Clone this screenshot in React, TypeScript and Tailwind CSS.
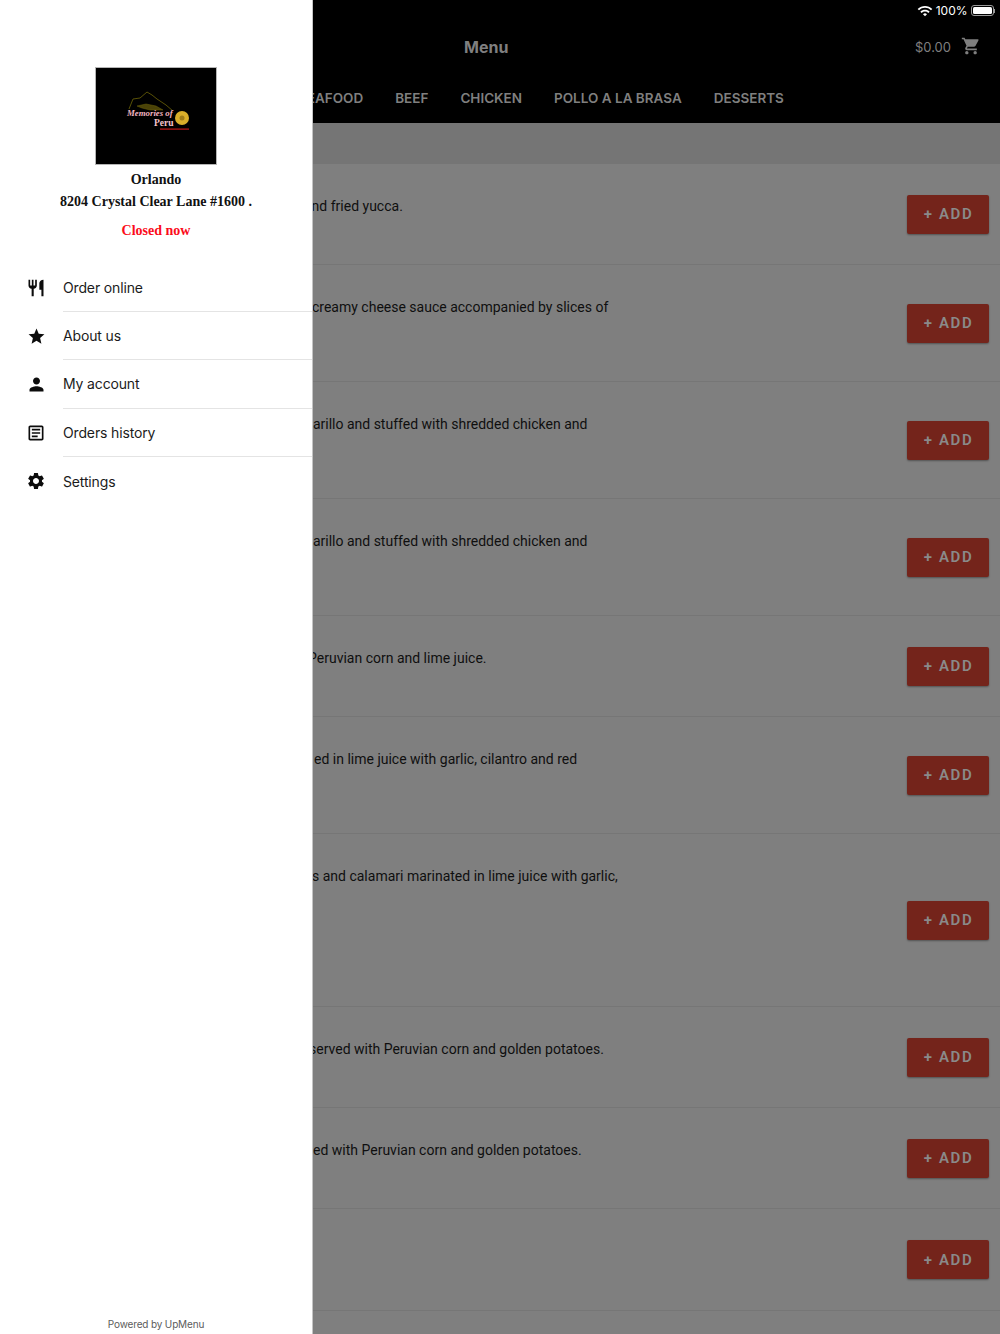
import React from "react";
import { MdRestaurant, MdStar, MdPerson, MdOutlineArticle, MdSettings, MdShoppingCart, MdWifi } from "react-icons/md";

const nav = [
  { label: "Order online", Icon: MdRestaurant, size: "w-[20px] h-[20px]" },
  { label: "About us", Icon: MdStar, size: "w-[19px] h-[19px]" },
  { label: "My account", Icon: MdPerson, size: "w-[21px] h-[21px]" },
  { label: "Orders history", Icon: MdOutlineArticle, size: "w-[20px] h-[20px]" },
  { label: "Settings", Icon: MdSettings, size: "w-[20px] h-[20px]" },
];

const rows = [
  { h: "h-[101px]", text: "and fried yucca.", shift: "ml-[-9px]" },
  { h: "h-[117px]", text: "creamy cheese sauce accompanied by slices of", shift: "ml-[-1px]" },
  { h: "h-[117px]", text: "amarillo and stuffed with shredded chicken and", shift: "ml-[-20px]" },
  { h: "h-[117px]", text: "amarillo and stuffed with shredded chicken and", shift: "ml-[-20px]" },
  { h: "h-[101px]", text: "Peruvian corn and lime juice.", shift: "ml-[-5px]" },
  { h: "h-[117px]", text: "ed in lime juice with garlic, cilantro and red", shift: "ml-[1px]" },
  { h: "h-[173px]", text: "s and calamari marinated in lime juice with garlic,", shift: "ml-[-1px]" },
  { h: "h-[101px]", text: "served with Peruvian corn and golden potatoes.", shift: "ml-[-4px]" },
  { h: "h-[101px]", text: "ed with Peruvian corn and golden potatoes.", shift: "ml-[0px]" },
  { h: "h-[102px]", text: "", shift: "ml-[0px]" },
];

function Logo() {
  return (
    <div className="w-[122px] h-[98px] bg-black border border-[#b5b5b5]">
      <svg width="120" height="96" viewBox="0 0 120 96">
        <path d="M33 41 L37 31 L44 30 L51 24 L56 27 L61 31 L70 37 L77 43" fill="none" stroke="#6e6408" strokeWidth="0.8" />
        <path d="M41 38 L50 36 L60 38 L67 42 L54 42 L46 40 Z" fill="#4a4208" stroke="#6e6408" strokeWidth="0.5" />
        <text x="31" y="48" fontFamily="'Liberation Serif', serif" fontSize="8.8" fontWeight="700" fontStyle="italic" fill="#f4b6c0">Memories of</text>
        <text x="58" y="57.5" fontFamily="'Liberation Serif', serif" fontSize="9.5" fontWeight="700" fill="#f4c4cc">Peru</text>
        <circle cx="86" cy="50" r="7" fill="#d9ae2a" />
        <circle cx="86" cy="50" r="2.5" fill="#a07c18" />
        <rect x="64" y="60.5" width="29" height="1.2" fill="#c01818" />
      </svg>
    </div>
  );
}

function Drawer() {
  return (
    <aside className="w-[313px] shrink-0 h-[1334px] bg-white flex flex-col border-r border-[#c4c4c4] font-['Inter',sans-serif]">
      <div className="flex flex-col items-center pt-[67px] font-['Liberation_Serif',serif] font-bold text-[#111111]">
        <Logo />
        <div className="mt-[5px] text-[14px] leading-[20px]">Orlando</div>
        <div className="mt-[1px] text-[14px] leading-[22px] whitespace-nowrap">8204 Crystal Clear Lane #1600 .</div>
        <div className="mt-[8px] text-[14px] leading-[20px] text-[#fb0d1b]">Closed now</div>
      </div>
      <nav className="mt-[22.7px] flex flex-col">
        {nav.map(({ label, Icon, size }, i) => (
          <div key={label} className="flex h-[48.3px] items-center">
            <div className="w-[63px] pl-[9px] shrink-0 flex justify-center">
              <Icon className={`${size} text-[#0c0c0c]`} />
            </div>
            <div className={`flex-1 h-full flex items-center text-[14px] tracking-[-0.15px] text-[#1b1b1b] ${i < nav.length - 1 ? "border-b border-[#e4e4e4]" : ""}`}>
              {label}
            </div>
          </div>
        ))}
      </nav>
      <div className="mt-auto pb-[3px] text-center text-[10px] tracking-[-0.15px] leading-[14px] text-[#5c5c5c]">Powered by UpMenu</div>
    </aside>
  );
}

function Main() {
  return (
    <main className="flex-1 min-w-0 h-[1334px] overflow-hidden bg-[#7f7f7f] font-['Inter',sans-serif]">
      <header className="bg-black h-[123px] flex flex-col">
        <div className="h-[20px] pt-[1px] flex items-center justify-end gap-[3px] pr-[5px] text-white text-[12px]">
          <MdWifi className="w-[16px] h-[16px]" />
          <span>100%</span>
          <div className="flex items-center">
            <div className="w-[23px] h-[11px] rounded-[3px] border border-[#9a9a9a] p-[1px]">
              <div className="w-full h-full rounded-[1.5px] bg-white" />
            </div>
            <div className="w-[1.5px] h-[4px] bg-[#9a9a9a]" />
          </div>
        </div>
        <div className="h-[54px] flex items-center pl-[151px] pr-[19px] text-[#7f7f7f]">
          <h1 className="text-[16px] font-bold">Menu</h1>
          <span className="ml-auto mt-[1px] text-[13px]">$0.00</span>
          <MdShoppingCart className="ml-[10px] w-[20px] h-[20px] mb-[2px]" />
        </div>
        <div className="flex-1 flex items-start pt-[14px] gap-[32px] text-[13.5px] font-semibold text-[#7f7f7f] whitespace-nowrap leading-[20px]">
          <span className="ml-[-15px]">SEAFOOD</span>
          <span>BEEF</span>
          <span>CHICKEN</span>
          <span>POLLO A LA BRASA</span>
          <span>DESSERTS</span>
        </div>
      </header>
      <div className="h-[41px] bg-[#757575]" />
      {rows.map((r, i) => (
        <div key={i} className={`${r.h} flex items-center border-b border-[#767676] pr-[11px]`}>
          <div className="flex-1 self-start pt-[32px] min-w-0">
            <p className={`${r.shift} font-['Roboto',sans-serif] text-[14px] leading-[20px] text-[#0f0f0f] whitespace-nowrap`}>{r.text}</p>
          </div>
          <button className="w-[82px] h-[39px] pt-[1px] pl-[1px] rounded-[2px] bg-[#74241b] shadow-[0_1px_2px_rgba(0,0,0,0.35)] text-[#8a8a8a] font-['Roboto',sans-serif] font-semibold text-[15px] tracking-[1.6px]">
            + ADD
          </button>
        </div>
      ))}
    </main>
  );
}

export default function App() {
  return (
    <div className="flex w-[1000px] h-[1334px] overflow-hidden">
      <Drawer />
      <Main />
    </div>
  );
}
